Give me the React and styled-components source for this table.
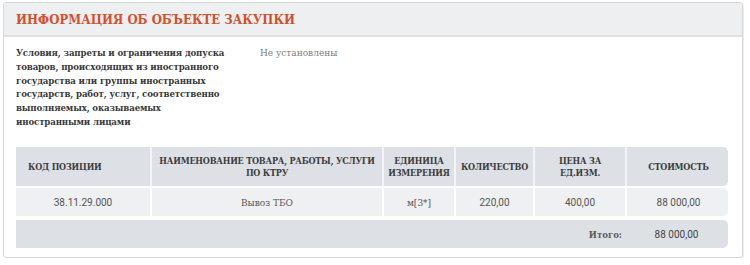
import React from 'react';
import styled, { createGlobalStyle } from 'styled-components';

const slab = `"DejaVu Serif Condensed", "DejaVu Serif", serif`;

const labelLines = [
    'Условия, запреты и ограничения допуска',
    'товаров, происходящих из иностранного',
    'государства или группы иностранных',
    'государств, работ, услуг, соответственно',
    'выполняемых, оказываемых',
    'иностранными лицами',
];

const rows = [
    { code: '38.11.29.000', name: 'Вывоз ТБО', unit: 'м[3*]', qty: '220,00', price: '400,00', cost: '88 000,00' },
];

const App = () => {
    return(
        <>
            <GlobalStyle />
            <Card>
                <Header>
                    <Title>Информация об объекте закупки</Title>
                </Header>
                <Body>
                    <InfoRow>
                        <Label>
                            {labelLines.map((l) => <LabelLine key={l}>{l}</LabelLine>)}
                        </Label>
                        <Value>Не установлены</Value>
                    </InfoRow>
                    <Table>
                        <HeadRow>
                            <HeadCell>Код позиции</HeadCell>
                            <HeadCell>Наименование товара, работы, услуги<br />по КТРУ</HeadCell>
                            <HeadCell>Единица<br />измерения</HeadCell>
                            <HeadCell>Количество</HeadCell>
                            <HeadCell>Цена за<br />ед.изм.</HeadCell>
                            <HeadCell $last>Стоимость</HeadCell>
                        </HeadRow>
                        {rows.map((r) => (
                            <DataRow key={r.code}>
                                <Cell $num>{r.code}</Cell>
                                <Cell>{r.name}</Cell>
                                <Cell>{r.unit}</Cell>
                                <Cell $num>{r.qty}</Cell>
                                <Cell $num>{r.price}</Cell>
                                <Cell $num $last>{r.cost}</Cell>
                            </DataRow>
                        ))}
                        <TotalRow>
                            <TotalLabel>Итого:</TotalLabel>
                            <TotalValue>88 000,00</TotalValue>
                        </TotalRow>
                    </Table>
                </Body>
            </Card>
        </>
    );
};

const GlobalStyle = createGlobalStyle`
    body {
        margin: 0;
        background: #ffffff;
        font-family: ${slab};
    }
`;
const Card = styled.div`
    margin: 2px 0 0 3px;
    width: 740px;
    height: 256px;
    box-sizing: border-box;
    border: 1px solid #d6d7d9;
    border-radius: 3px;
    box-shadow: 1px 1px 1px rgba(0, 0, 0, 0.08);
    overflow: hidden;
`;
const Header = styled.div`
    height: 32px;
    background-color: #eeeff1;
    border-bottom: 2px solid #dfe0e3;
    display: flex;
    align-items: center;
    padding-left: 12px;
`;
const Title = styled.h2`
    margin: 0;
    font-size: 13px;
    font-weight: bold;
    text-transform: uppercase;
    color: #d4502a;
`;
const Body = styled.div`
    padding: 9px 14px 0 12px;
`;
const InfoRow = styled.div`
    display: flex;
    height: 101px;
`;
const Label = styled.div`
    width: 244px;
    font-size: 9.6px;
    line-height: 13.8px;
    font-weight: bold;
    letter-spacing: -0.15px;
    color: #3a3a3a;
`;
const LabelLine = styled.div`
    white-space: nowrap;
`;
const Value = styled.div`
    font-size: 10px;
    line-height: 13.8px;
    color: #7d7d7d;
`;
const Table = styled.div`
    display: flex;
    flex-direction: column;
    gap: 2px;
`;
const cols = [136, 232, 72, 79, 92, 103];
const HeadRow = styled.div`
    display: grid;
    grid-template-columns: ${cols.map((c) => c + 'px').join(' ')};
    height: 39px;
    background-color: #dde0e5;
    border-radius: 0 5px 5px 0;
`;
const HeadCell = styled.div`
    display: flex;
    align-items: center;
    justify-content: center;
    text-align: center;
    white-space: nowrap;
    font-size: 9px;
    line-height: 12px;
    font-weight: bold;
    letter-spacing: -0.2px;
    text-transform: uppercase;
    color: #3c3c3c;
    border-right: ${(p) => (p.$last ? 'none' : '2px solid #f4f5f7')};
    &:first-child {
        justify-content: flex-start;
        padding-left: 12px;
    }
`;
const DataRow = styled(HeadRow)`
    height: 28px;
    background-color: #eef0f2;
    margin-bottom: 2px;
`;
const Cell = styled.div`
    display: flex;
    align-items: center;
    justify-content: center;
    font-family: ${(p) => (p.$num ? '"Roboto", sans-serif' : slab)};
    font-size: 10px;
    color: #555555;
    border-right: ${(p) => (p.$last ? 'none' : '2px solid #ffffff')};
`;
const TotalRow = styled.div`
    display: flex;
    height: 28px;
    align-items: center;
    background-color: #dde0e5;
    border-radius: 0 5px 5px 0;
`;
const TotalLabel = styled.div`
    flex: 1;
    text-align: right;
    padding-right: 3px;
    font-size: 9.5px;
    font-weight: bold;
    color: #5a5a5a;
`;
const TotalValue = styled.div`
    width: 103px;
    text-align: center;
    font-family: "Roboto", sans-serif;
    font-size: 10px;
    color: #444444;
`;

export default App;
